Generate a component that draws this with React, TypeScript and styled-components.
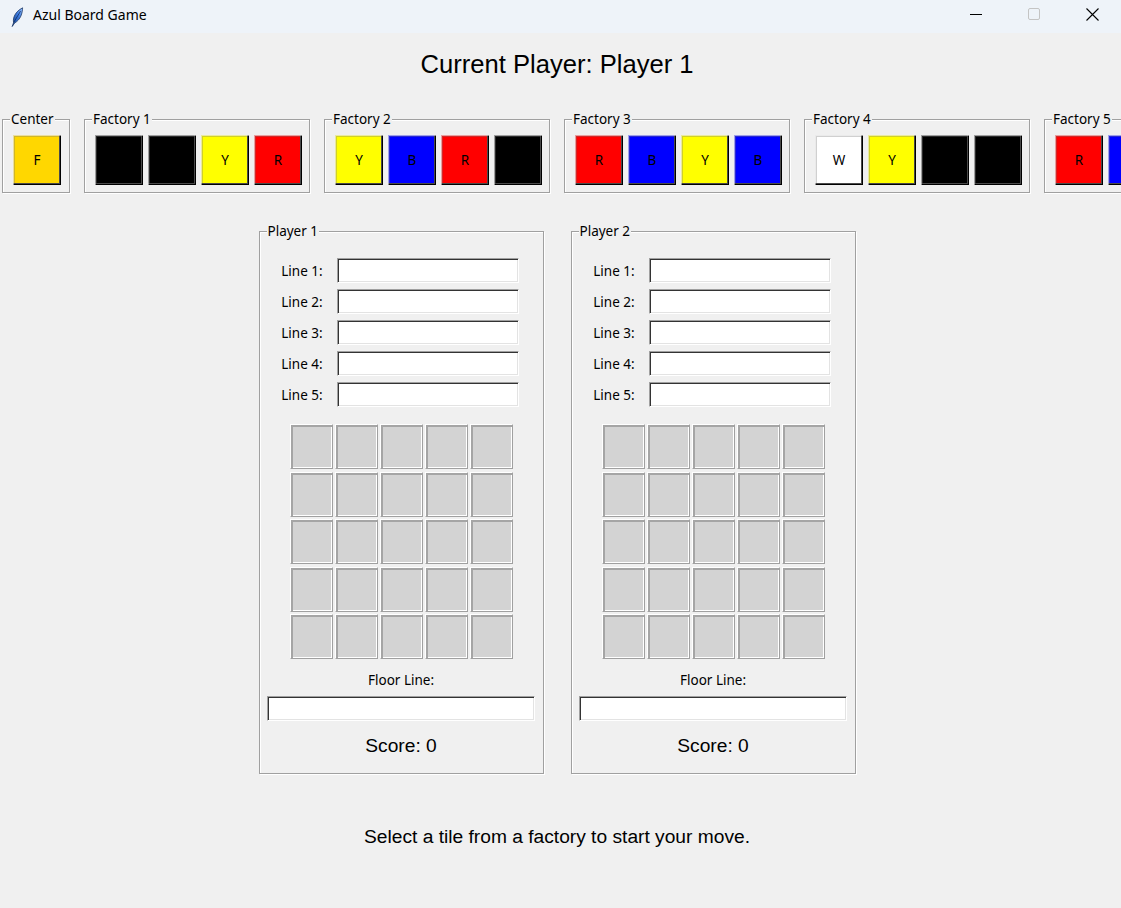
import React from "react";
import styled, { createGlobalStyle } from "styled-components";

const GlobalStyle = createGlobalStyle`
  html, body {
    margin: 0;
    padding: 0;
    background: #f0f0f0;
    overflow: hidden;
  }
  * { box-sizing: border-box; }
`;

const Window = styled.div`
  width: 1121px;
  height: 908px;
  display: flex;
  flex-direction: column;
  background: #f0f0f0;
  overflow: hidden;
  font-family: "Noto Sans", "Open Sans", sans-serif;
  color: #000;
`;

const TitleBar = styled.div`
  height: 33px;
  flex: none;
  display: flex;
  align-items: center;
  background: #eef3f9;
`;

const AppIcon = styled.div`
  width: 33px;
  height: 33px;
  display: flex;
  align-items: center;
  justify-content: center;
  padding-left: 1px;
`;

const WindowTitle = styled.div`
  flex: 1;
  font-size: 14px;
  line-height: 20px;
  color: #000;
  padding-bottom: 4px;
`;

const Caption = styled.div`
  width: 58px;
  height: 33px;
  display: flex;
  align-items: center;
  justify-content: center;
  padding-bottom: 5px;
`;

const Content = styled.div`
  flex: 1;
  display: flex;
  flex-direction: column;
  align-items: center;
  padding-right: 7px;
`;

const Heading = styled.div`
  margin-top: 17px;
  font-family: "Liberation Sans", Arial, sans-serif;
  font-size: 25.6px;
  line-height: 28px;
`;

const FactoryRow = styled.div`
  align-self: flex-start;
  margin-left: 2px;
  margin-top: 32px;
  display: flex;
  gap: 14px;
  width: max-content;
`;

const Group = styled.fieldset<{ $padL: number; $padR: number }>`
  margin: 0;
  min-width: 0;
  border: 1px solid #a0a0a0;
  box-shadow: inset 1px 1px 0 #ffffff, 1px 1px 0 #ffffff;
  padding: 7px ${(p) => p.$padR}px 7px ${(p) => p.$padL}px;
  display: flex;
  gap: 5px;
`;

const GroupLabel = styled.legend<{ $shift: number }>`
  font-size: 13.5px;
  line-height: 18px;
  padding: 0 1px;
  margin-left: ${(p) => p.$shift}px;
  background: #f0f0f0;
`;

const Tile = styled.div<{ $bg: string }>`
  width: 48px;
  height: 50px;
  flex: none;
  background: ${(p) => p.$bg};
  display: flex;
  align-items: center;
  justify-content: center;
  font-size: 13.5px;
  color: #000;
  box-shadow: inset 1px 1px 0 rgba(255, 255, 255, 0.55),
    inset -1px -1px 0 #000000, inset -2px -2px 0 #4a4a4a,
    inset 2px 2px 0 rgba(120, 120, 120, 0.35);
`;

const Players = styled.div`
  display: flex;
  gap: 27px;
  margin-top: 29px;
`;

const Board = styled.fieldset`
  margin: 0;
  width: 285px;
  border: 1px solid #a0a0a0;
  box-shadow: inset 1px 1px 0 #ffffff, 1px 1px 0 #ffffff;
  padding: 18px 0 16px 0;
  display: flex;
  flex-direction: column;
  align-items: center;
`;

const Lines = styled.div`
  display: grid;
  grid-template-columns: auto 182px;
  column-gap: 14px;
  row-gap: 6px;
  align-items: center;
  margin-left: -2px;
`;

const LineLabel = styled.div`
  font-size: 13.5px;
  line-height: 18px;
  text-align: right;
`;

const Field = styled.div<{ $w?: number }>`
  width: ${(p) => (p.$w ? `${p.$w}px` : "100%")};
  height: 25px;
  background: #ffffff;
  border: 1px solid;
  border-color: #a0a0a0 #ffffff #ffffff #a0a0a0;
  box-shadow: inset 1px 1px 0 #333333, inset -1px -1px 0 #e3e3e3;
`;

const Wall = styled.div`
  margin-top: 17px;
  display: grid;
  grid-template-columns: repeat(5, 43px);
  grid-auto-rows: 45px;
  column-gap: 2px;
  row-gap: 2.5px;
`;

const WallCell = styled.div`
  background: #d3d3d3;
  border: 1px solid;
  border-color: #ffffff #a0a0a0 #a0a0a0 #ffffff;
  box-shadow: inset 2px 2px 0 #a5a5a5, inset -1px -1px 0 #ffffff;
`;

const FloorLabel = styled.div`
  margin-top: 12px;
  font-size: 13.5px;
  line-height: 18px;
`;

const FloorField = styled(Field)`
  margin-top: 7px;
`;

const Score = styled.div`
  margin-top: 14px;
  font-family: "Liberation Sans", Arial, sans-serif;
  font-size: 19.2px;
  line-height: 22px;
`;

const Status = styled.div`
  margin-top: 52px;
  font-family: "Liberation Sans", Arial, sans-serif;
  font-size: 19.2px;
  line-height: 22px;
`;

const COLORS: Record<string, string> = {
  F: "#ffd700",
  K: "#000000",
  Y: "#ffff00",
  R: "#ff0000",
  B: "#0000ff",
  W: "#ffffff",
};

const factories: string[][] = [
  ["K", "K", "Y", "R"],
  ["Y", "B", "R", "K"],
  ["R", "B", "Y", "B"],
  ["W", "Y", "K", "K"],
  ["R", "B", "K", "Y"],
];

const Feather = () => (
  <svg width="14" height="20" viewBox="0 0 14 20">
    <defs>
      <linearGradient id="fg" x1="0" y1="1" x2="1" y2="0">
        <stop offset="0" stopColor="#123f8c" />
        <stop offset="0.6" stopColor="#3d7be0" />
        <stop offset="1" stopColor="#9cc4ff" />
      </linearGradient>
    </defs>
    <path
      d="M2.2 19.5 L3.6 15.6 C2.6 11 5 4.8 12.6 0.8 C12.4 6 10.8 12.6 4.6 16 Z"
      fill="url(#fg)"
      stroke="#1c3766"
      strokeWidth="0.8"
      strokeLinejoin="round"
    />
    <path d="M3.6 15.6 L10.6 4" stroke="#0c2552" strokeWidth="0.7" />
  </svg>
);

const Player = ({ name }: { name: string }) => (
  <Board>
    <GroupLabel $shift={7}>{name}</GroupLabel>
    <Lines>
      {[1, 2, 3, 4, 5].map((n) => (
        <React.Fragment key={n}>
          <LineLabel>Line {n}:</LineLabel>
          <Field />
        </React.Fragment>
      ))}
    </Lines>
    <Wall>
      {Array.from({ length: 25 }).map((_, i) => (
        <WallCell key={i} />
      ))}
    </Wall>
    <FloorLabel>Floor Line:</FloorLabel>
    <FloorField $w={268} />
    <Score>Score: 0</Score>
  </Board>
);

export default function App() {
  return (
    <>
      <GlobalStyle />
      <Window>
        <TitleBar>
          <AppIcon>
            <Feather />
          </AppIcon>
          <WindowTitle>Azul Board Game</WindowTitle>
          <Caption>
            <svg width="12" height="12" viewBox="0 0 12 12">
              <line x1="0" y1="6.5" x2="12" y2="6.5" stroke="#000" strokeWidth="1" />
            </svg>
          </Caption>
          <Caption>
            <svg width="12" height="12" viewBox="0 0 12 12">
              <rect x="0.5" y="0.5" width="11" height="11" rx="1.5" fill="none" stroke="#c4c4c4" strokeWidth="1" />
            </svg>
          </Caption>
          <Caption>
            <svg width="13" height="13" viewBox="0 0 13 13">
              <path d="M0.5 0.5 L12.5 12.5 M12.5 0.5 L0.5 12.5" stroke="#000" strokeWidth="1.1" />
            </svg>
          </Caption>
        </TitleBar>
        <Content>
          <Heading>Current Player: Player 1</Heading>
          <FactoryRow>
            <Group $padL={10} $padR={8}>
              <GroupLabel $shift={-3}>Center</GroupLabel>
              <Tile $bg={COLORS.F}>F</Tile>
            </Group>
            {factories.map((f, i) => (
              <Group key={i} $padL={10} $padR={7}>
                <GroupLabel $shift={-3}>Factory {i + 1}</GroupLabel>
                {f.map((c, j) => (
                  <Tile key={j} $bg={COLORS[c]}>
                    {c}
                  </Tile>
                ))}
              </Group>
            ))}
          </FactoryRow>
          <Players>
            <Player name="Player 1" />
            <Player name="Player 2" />
          </Players>
          <Status>Select a tile from a factory to start your move.</Status>
        </Content>
      </Window>
    </>
  );
}
